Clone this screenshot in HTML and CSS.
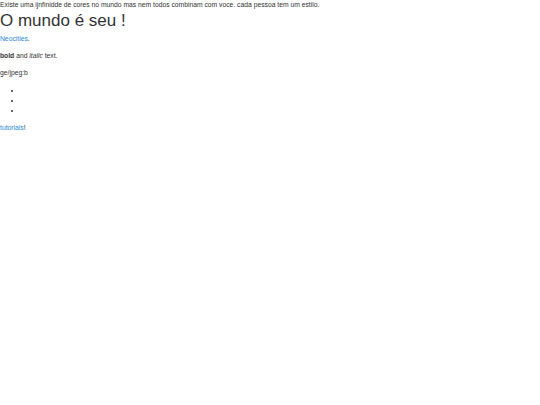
FILE: index.html
```html
<!DOCTYPE html>
<html>
<head>
<meta charset="utf-8">
<title>O mundo é seu !</title>
<link rel="stylesheet" href="styles.css">
</head>
<body>
<div class="intro">Existe uma ijnfinidde de cores no mundo mas nem todos combinam com voce. cada pessoa tem um estilo.</div>
<h1 class="title">O mundo é seu !</h1>
<p class="para"><a class="link" href="#">Neocities</a>.</p>
<p class="para"><strong>bold</strong> and <em>italic</em> text.</p>
<p class="para">ge/jpeg:b</p>
<ul class="list">
<li></li>
<li></li>
<li></li>
</ul>
<p class="para"><a class="link" href="#">tutorials</a>!</p>
</body>
</html>
```
FILE: styles.css
```css
html, body {
  margin: 0;
  padding: 0;
  background: #fff;
}
body {
  font-family: "Liberation Sans", Arial, sans-serif;
  font-size: 6.75px;
  line-height: 10px;
  color: #333;
}
.intro {
  margin: 0;
}
.title {
  font-family: "Liberation Sans", Arial, sans-serif;
  font-weight: 400;
  font-size: 17px;
  line-height: 19px;
  margin: 1px 0 4px;
}
.para {
  margin: 0 0 7px;
}
.list {
  margin: 0 0 7px;
  padding: 1px 0 0 22px;
}
.list li {
  height: 10px;
}
.link {
  color: #2a8ad8;
  text-decoration: none;
}
```
